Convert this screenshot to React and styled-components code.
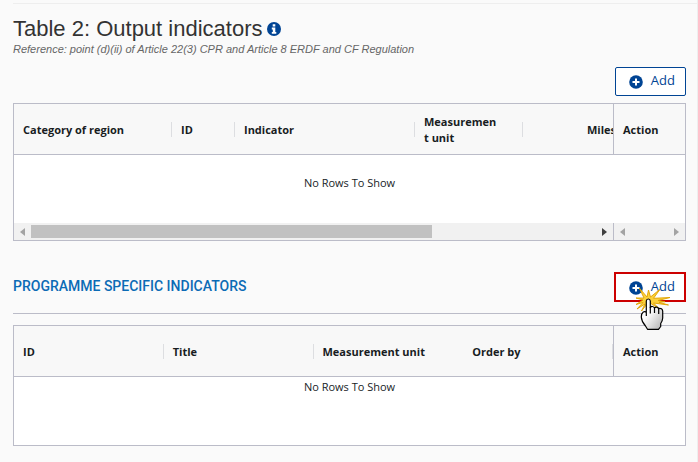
import React from 'react';
import styled, { createGlobalStyle } from 'styled-components';

const GlobalStyle = createGlobalStyle`
  * {
    box-sizing: border-box;
  }

  body {
    margin: 0;
    background-color: #fafafa;
    color: #181d1f;
    font-family: 'Open Sans', 'Noto Sans', sans-serif;
    font-size: 11px;
  }
`;

const Page = styled.main`
  min-height: 100vh;
  padding: 3px 0 16px 13px;
  border-right: 1px solid #eeeeee;
`;

const Content = styled.div`
  padding: 12px 11px 0 0;
  border-top: 1px solid #eeeeee;
`;

const TitleRow = styled.div`
  display: flex;
  align-items: center;
  gap: 5px;
`;

const Title = styled.h1`
  margin: 0;
  color: #333333;
  font-family: 'Liberation Sans', Arial, sans-serif;
  font-size: 22px;
  font-weight: 400;
  line-height: 26px;
`;

const Reference = styled.p`
  margin: 0;
  color: #666666;
  font-family: 'Liberation Sans', Arial, sans-serif;
  font-size: 11px;
  font-style: italic;
  line-height: 14px;
`;

const Toolbar = styled.div`
  display: flex;
  justify-content: flex-end;
  margin: 11px 0 7px;
`;

const AddButton = styled.button`
  display: flex;
  align-items: center;
  gap: 8px;
  height: ${(props) => (props.$marked ? '30px' : '29px')};
  padding: ${(props) => (props.$marked ? '0 9px 0 13px' : '0 10px 0 13px')};
  border: ${(props) => (props.$marked ? '2px solid #cc0000' : '1px solid #004494')};
  border-radius: ${(props) => (props.$marked ? '0' : '2px')};
  background-color: #ffffff;
  color: #004494;
  font-family: 'Open Sans', 'Noto Sans', sans-serif;
  font-size: 13px;
  cursor: pointer;

  svg {
    margin-top: 1px;
  }
`;

const ButtonText = styled.span`
  padding-bottom: 3px;
`;

const SectionHeader = styled.div`
  display: flex;
  align-items: center;
  justify-content: space-between;
  margin: 31px 0 11px;
  padding-bottom: 11px;
  border-bottom: 1px solid #bbbcc8;
`;

const SectionTitle = styled.h2`
  margin: 0;
  padding-bottom: 2px;
  color: #0b6bb5;
  font-family: Roboto, sans-serif;
  font-size: 14px;
  font-weight: 500;
`;

const ButtonHolder = styled.div`
  position: relative;
`;

const Pointer = styled.svg`
  position: absolute;
  left: 12px;
  top: 8px;
  pointer-events: none;
`;

const Grid = styled.div`
  border: 1px solid #bbbcc8;
  background-color: #ffffff;
`;

const Table = styled.table`
  width: 100%;
  border-collapse: separate;
  border-spacing: 0;
  table-layout: fixed;
`;

const HeadCell = styled.th`
  height: 51px;
  padding: 0;
  overflow: hidden;
  border-bottom: 1px solid #bbbcc8;
  border-left: ${(props) => (props.$pinned ? '1px solid #bbbcc8' : '0')};
  background-color: #f8f8f8;
  font-weight: 700;
  line-height: 16px;
  text-align: left;
`;

const HeadLabel = styled.div`
  display: flex;
  align-items: center;
  height: 15px;
  padding-top: 2px;
  padding-left: ${(props) => (props.$indent ? '64px' : '9px')};
  padding-right: ${(props) => (props.$narrow ? '22px' : '0')};
  border-right: ${(props) => (props.$divider ? '1px solid #dddee1' : '0')};
  overflow-wrap: anywhere;
  white-space: ${(props) => (props.$narrow ? 'normal' : 'nowrap')};
`;

const EmptyCell = styled.td`
  height: 68px;
  padding: ${(props) => (props.$tall ? '0 0 12px' : '2px 0 0')};
  vertical-align: ${(props) => (props.$tall ? 'middle' : 'top')};
  line-height: 16px;
  text-align: center;
`;

const ScrollRow = styled.div`
  display: flex;
`;

const ScrollBar = styled.div`
  display: flex;
  align-items: center;
  justify-content: space-between;
  flex: ${(props) => (props.$pinned ? '0 0 72px' : '1')};
  height: 17px;
  border-left: ${(props) => (props.$pinned ? '1px solid #bbbcc8' : '0')};
  background-color: #f1f1f1;
`;

const ScrollTrack = styled.div`
  flex: 1;
  height: 13px;
`;

const ScrollThumb = styled.div`
  width: 71%;
  height: 100%;
  background-color: #c1c1c1;
`;

const ScrollButton = styled.button`
  display: flex;
  align-items: center;
  justify-content: center;
  width: 17px;
  height: 17px;
  padding: 0;
  border: 0;
  background: none;
  color: ${(props) => (props.$active ? '#404040' : '#a3a3a3')};
`;

const InfoIcon = () => (
  <svg width="14" height="14" viewBox="0 0 14 14" aria-hidden="true">
    <circle cx="7" cy="7" r="7" fill="#004494" />
    <path d="M5.7 2.2h2.6v2.3H5.7zM4.8 5.6h3.5v4.3h1v1.8H4.8V9.9h1V7.4h-1z" fill="#ffffff" />
  </svg>
);

const PlusIcon = () => (
  <svg width="14" height="14" viewBox="0 0 14 14" aria-hidden="true">
    <circle cx="7" cy="7" r="6.8" fill="#004494" />
    <path d="M6 3.5h2V6h2.5v2H8v2.5H6V8H3.5V6H6z" fill="#ffffff" />
  </svg>
);

const Arrow = ({ right }) => (
  <svg width="5" height="8" viewBox="0 0 5 8" aria-hidden="true">
    <path d={right ? 'M0 0l5 4-5 4z' : 'M5 0L0 4l5 4z'} fill="currentColor" />
  </svg>
);

const ClickPointer = () => (
  <Pointer width="46" height="52" viewBox="0 0 46 52" aria-hidden="true">
    <defs>
      <linearGradient id="hand" x1="0" y1="0" x2="1" y2="1">
        <stop offset="0.4" stopColor="#ffffff" />
        <stop offset="1" stopColor="#b0b0b0" />
      </linearGradient>
    </defs>
    <path
      d="M21 17L22.5 10l2 7L34 9.3l-6.5 9L44 17.5l-12 3 7 1.2-6 .6L42.500 25l-15-2 6 6-11-7-7 9 3.500-7-8 5 6-6.500-7 2 7-4.500-7-2 8 0L13.300 8z"
      fill="#fbd03a"
      stroke="#dfa200"
      strokeWidth="0.9"
      strokeLinejoin="round"
    />
    <path
      d="M20.3 36V21q.2-2 2-2t2 2v6.5q2-2.2 4.2.3 2.5-1.8 4.2.8 3.5-.8 4 2.4V38q-.2 3-2 5.5v3L32.5 49.3H21.5L19.5 46q-4-4.5-4.2-9 0-3.500 2-5 1.500-.8 3 .2"
      fill="url(#hand)"
      stroke="#000000"
      strokeWidth="1.2"
      strokeLinejoin="round"
    />
    <path d="M24.3 27v6.5M28.5 28v5M32.7 29v5" fill="none" stroke="#000000" strokeWidth="1.2" />
  </Pointer>
);

const regionColumns = [
  { label: 'Category of region', width: 158, divider: true },
  { label: 'ID', width: 63, divider: true },
  { label: 'Indicator', divider: true },
  { label: 'Measurement unit', width: 108, divider: true, narrow: true },
  { label: 'Milestone', width: 90, indent: true },
  { label: 'Action', width: 72, pinned: true },
];

const specificColumns = [
  { label: 'ID', divider: true },
  { label: 'Title', divider: true },
  { label: 'Measurement unit' },
  { label: 'Order by', divider: true },
  { label: 'Action', width: 72, pinned: true },
];

const IndicatorTable = ({ columns, tall, label }) => (
  <Table aria-label={label}>
    <colgroup>
      {columns.map((column) => (
        <col key={column.label} width={column.width} />
      ))}
    </colgroup>
    <thead>
      <tr>
        {columns.map((column) => (
          <HeadCell key={column.label} scope="col" $pinned={column.pinned}>
            <HeadLabel $divider={column.divider} $narrow={column.narrow} $indent={column.indent}>
              {column.label}
            </HeadLabel>
          </HeadCell>
        ))}
      </tr>
    </thead>
    <tbody>
      <tr>
        <EmptyCell colSpan={columns.length} $tall={tall}>
          No Rows To Show
        </EmptyCell>
      </tr>
    </tbody>
  </Table>
);

const App = () => {
  return (
    <>
      <GlobalStyle />
      <Page>
        <Content>
          <TitleRow>
            <Title>Table 2: Output indicators</Title>
            <InfoIcon />
          </TitleRow>
          <Reference>
            Reference: point (d)(ii) of Article 22(3) CPR and Article 8 ERDF and CF Regulation
          </Reference>
          <Toolbar>
            <AddButton type="button">
              <PlusIcon />
              <ButtonText>Add</ButtonText>
            </AddButton>
          </Toolbar>
          <Grid>
            <IndicatorTable columns={regionColumns} tall label="Output indicators" />
            <ScrollRow>
              <ScrollBar>
                <ScrollButton type="button" aria-label="Scroll left">
                  <Arrow />
                </ScrollButton>
                <ScrollTrack>
                  <ScrollThumb />
                </ScrollTrack>
                <ScrollButton type="button" aria-label="Scroll right" $active>
                  <Arrow right />
                </ScrollButton>
              </ScrollBar>
              <ScrollBar $pinned>
                <ScrollButton type="button" aria-label="Scroll action left">
                  <Arrow />
                </ScrollButton>
                <ScrollButton type="button" aria-label="Scroll action right">
                  <Arrow right />
                </ScrollButton>
              </ScrollBar>
            </ScrollRow>
          </Grid>
          <SectionHeader>
            <SectionTitle>PROGRAMME SPECIFIC INDICATORS</SectionTitle>
            <ButtonHolder>
              <AddButton type="button" $marked>
                <PlusIcon />
                <ButtonText>Add</ButtonText>
              </AddButton>
              <ClickPointer />
            </ButtonHolder>
          </SectionHeader>
          <Grid>
            <IndicatorTable columns={specificColumns} label="Programme specific indicators" />
          </Grid>
        </Content>
      </Page>
    </>
  );
};

export default App;
